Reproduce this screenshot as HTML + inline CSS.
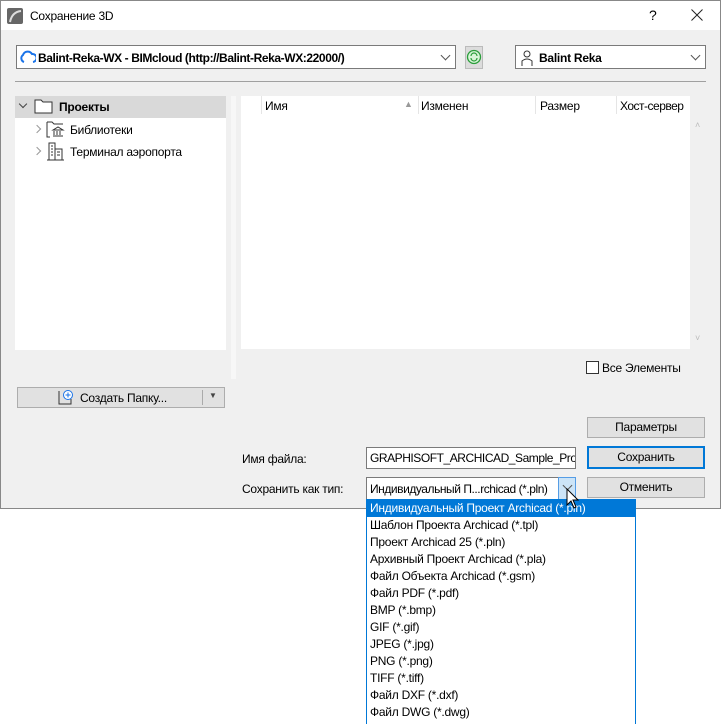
<!DOCTYPE html><html><head><meta charset="utf-8"><style>
*{box-sizing:border-box;margin:0;padding:0}
body{width:722px;height:724px;background:#fff;position:relative;overflow:hidden;font-family:"Liberation Sans","DejaVu Sans",sans-serif;font-size:12px;color:#000;letter-spacing:-0.25px}
.a{position:absolute}
.dlg{left:0;top:0;width:721px;height:509px;background:#f0f0f0}
.brd{left:0;top:0;width:721px;height:509px;border:1px solid #888}
.tb{left:0;top:0;width:721px;height:30px;background:#fff}
.btn{background:#e1e1e1;border:1px solid #adadad;text-align:center;line-height:19px}
.combo{background:#fff;border:1px solid #7a7a7a}
.chev{width:7px;height:7px;border-right:1px solid #555;border-bottom:1px solid #555;transform:rotate(45deg)}
.it{left:0;width:268px;height:17px;line-height:17px;padding-left:3px;font-size:12px}
</style></head><body>
<div class="a dlg">
<div class="a tb">
 <svg class="a" style="left:7px;top:8px" width="16" height="16"><rect width="16" height="16" rx="2" fill="#666"/><path d="M3 14 Q5 4 14 3" stroke="#ddd" stroke-width="2" fill="none"/></svg>
 <div class="a" style="left:30px;top:9px;font-size:12px">Сохранение 3D</div>
 <div class="a" style="left:649px;top:7px;font-size:14px">?</div>
 <svg class="a" style="left:691px;top:9px" width="12" height="12"><path d="M0.5 0.5 L11.5 11.5 M11.5 0.5 L0.5 11.5" stroke="#222" stroke-width="1"/></svg>
</div>
<div class="a combo" style="left:16px;top:45px;width:440px;height:24px"></div>
<svg class="a" style="left:20px;top:50px" width="16" height="14"><path d="M4 12 A4 4 0 0 1 3 5 A5 5 0 0 1 12 4 A4 4 0 0 1 13 12" stroke="#1a73e8" stroke-width="2" fill="none"/></svg>
<div class="a" style="left:38px;top:51px;font-weight:bold;font-size:12px;letter-spacing:-0.4px">Balint-Reka-WX - BIMcloud (http://Balint-Reka-WX:22000/)</div>
<div class="a chev" style="left:442px;top:52px"></div>
<div class="a" style="left:465px;top:46px;width:18px;height:23px;background:#dcdcdc;border:1px solid #bbb"></div>
<svg class="a" style="left:466px;top:49px" width="16" height="16"><circle cx="8" cy="8" r="6.5" fill="#d8f5d8" stroke="#2a9d3a" stroke-width="1.3"/><path d="M5 7 A3 3 0 0 1 11 7 M11 9 A3 3 0 0 1 5 9" stroke="#2a9d3a" stroke-width="1.2" fill="none"/></svg>
<div class="a combo" style="left:515px;top:45px;width:191px;height:24px"></div>
<svg class="a" style="left:521px;top:49px" width="12" height="18"><circle cx="6" cy="5" r="3" fill="none" stroke="#333"/><path d="M1 17 V12 Q6 8 11 12 V17" fill="none" stroke="#333"/></svg>
<div class="a" style="left:539px;top:51px;font-weight:bold">Balint Reka</div>
<div class="a chev" style="left:692px;top:52px"></div>
<div class="a" style="left:15px;top:81px;width:691px;height:1px;background:#a0a0a0"></div>
<div class="a" style="left:15px;top:96px;width:211px;height:254px;background:#fff"></div>
<div class="a" style="left:15px;top:96px;width:211px;height:22px;background:#d9d9d9"></div>
<div class="a" style="left:20px;top:101px;width:6px;height:6px;border-right:1.5px solid #444;border-bottom:1.5px solid #444;transform:rotate(45deg)"></div>
<svg class="a" style="left:34px;top:97px" width="20" height="18"><path d="M1 3 H7 L9 5 H18 V16 H1 Z" fill="#fff" stroke="#333"/></svg>
<div class="a" style="left:59px;top:100px;font-weight:bold">Проекты</div>
<div class="a" style="left:34px;top:126px;width:6px;height:6px;border-right:1px solid #999;border-top:1px solid #999;transform:rotate(45deg)"></div>
<svg class="a" style="left:46px;top:119px" width="20" height="20"><path d="M1 3 H6 L8 5 H17 M1 3 V18 H4" fill="none" stroke="#333"/><path d="M7 11 L12 8 L17 11 Z M8 12 V16 M11 12 V16 M14 12 V16 M7 17 H17" stroke="#333" fill="none"/></svg>
<div class="a" style="left:70px;top:123px">Библиотеки</div>
<div class="a" style="left:34px;top:148px;width:6px;height:6px;border-right:1px solid #999;border-top:1px solid #999;transform:rotate(45deg)"></div>
<svg class="a" style="left:46px;top:141px" width="20" height="20"><path d="M3 19 V2 H9 V19 M9 8 H16 V19 M1 19 H18" fill="none" stroke="#333"/><path d="M5 5 H7 M5 8 H7 M5 11 H7 M5 14 H7 M11 11 H14 M11 14 H14" stroke="#333"/></svg>
<div class="a" style="left:70px;top:145px">Терминал аэропорта</div>
<div class="a" style="left:231px;top:96px;width:5px;height:283px;background:#f7f7f7"></div>
<div class="a" style="left:241px;top:96px;width:449px;height:253px;background:#fff"></div>
<div class="a" style="left:261px;top:96px;width:1px;height:18px;background:#e5e5e5"></div>
<div class="a" style="left:418px;top:96px;width:1px;height:18px;background:#e5e5e5"></div>
<div class="a" style="left:535px;top:96px;width:1px;height:18px;background:#e5e5e5"></div>
<div class="a" style="left:616px;top:96px;width:1px;height:18px;background:#e5e5e5"></div>
<div class="a" style="left:265px;top:99px">Имя</div>
<div class="a" style="left:404px;top:99px;font-size:9px;color:#999">▲</div>
<div class="a" style="left:421px;top:99px">Изменен</div>
<div class="a" style="left:540px;top:99px">Размер</div>
<div class="a" style="left:620px;top:99px;letter-spacing:-0.5px">Хост-сервер</div>
<div class="a" style="left:690px;top:114px;width:16px;height:235px;background:#f0f0f0"></div>
<div class="a" style="left:695px;top:120px;font-size:9px;color:#bbb">˄</div>
<div class="a" style="left:695px;top:333px;font-size:9px;color:#bbb">˅</div>
<div class="a" style="left:586px;top:361px;width:13px;height:13px;background:#fff;border:1px solid #333"></div>
<div class="a" style="left:602px;top:361px">Все Элементы</div>
<div class="a btn" style="left:17px;top:387px;width:208px;height:21px"></div>
<svg class="a" style="left:58px;top:389px" width="16" height="17"><path d="M1 2 V15 H13 V10" fill="none" stroke="#333"/><circle cx="10" cy="6" r="4.5" fill="#fff" stroke="#1a73e8"/><path d="M10 3.5 V8.5 M7.5 6 H12.5" stroke="#1a73e8"/></svg>
<div class="a" style="left:80px;top:391px">Создать Папку...</div>
<div class="a" style="left:202px;top:390px;width:1px;height:15px;background:#aaa"></div>
<div class="a" style="left:209px;top:391px;font-size:8px;color:#444">▼</div>
<div class="a btn" style="left:587px;top:417px;width:118px;height:21px">Параметры</div>
<div class="a" style="left:242px;top:452px">Имя файла:</div>
<div class="a combo" style="left:366px;top:447px;width:210px;height:22px;overflow:hidden;padding:3px 0 0 3px;white-space:nowrap;letter-spacing:-0.45px">GRAPHISOFT_ARCHICAD_Sample_Project</div>
<div class="a btn" style="left:587px;top:446px;width:118px;height:23px;border:2px solid #0078d7">Сохранить</div>
<div class="a" style="left:242px;top:482px">Сохранить как тип:</div>
<div class="a combo" style="left:366px;top:477px;width:210px;height:23px;padding:4px 0 0 3px;white-space:nowrap;overflow:hidden;letter-spacing:-0.45px">Индивидуальный П...rchicad (*.pln)</div>
<div class="a" style="left:558px;top:477px;width:18px;height:23px;background:#cce4f7;border:1px solid #569de5"></div>
<div class="a chev" style="left:564px;top:482px"></div>
<div class="a btn" style="left:587px;top:477px;width:118px;height:21px">Отменить</div>
<div class="a brd"></div>
</div>
<div class="a" style="left:366px;top:499px;width:270px;height:225px;background:#fff;border:1px solid #0078d7;border-bottom:none;overflow:hidden">
<div class="a it" style="top:0;background:#0078d7;color:#fff">Индивидуальный Проект Archicad (*.pln)</div>
<div class="a it" style="top:17px">Шаблон Проекта Archicad (*.tpl)</div>
<div class="a it" style="top:34px">Проект Archicad 25 (*.pln)</div>
<div class="a it" style="top:51px">Архивный Проект Archicad (*.pla)</div>
<div class="a it" style="top:68px">Файл Объекта Archicad (*.gsm)</div>
<div class="a it" style="top:85px">Файл PDF (*.pdf)</div>
<div class="a it" style="top:102px">BMP (*.bmp)</div>
<div class="a it" style="top:119px">GIF (*.gif)</div>
<div class="a it" style="top:136px">JPEG (*.jpg)</div>
<div class="a it" style="top:153px">PNG (*.png)</div>
<div class="a it" style="top:170px">TIFF (*.tiff)</div>
<div class="a it" style="top:187px">Файл DXF (*.dxf)</div>
<div class="a it" style="top:204px">Файл DWG (*.dwg)</div>
</div>
<svg class="a" style="left:566px;top:488px" width="14" height="22"><path d="M1 1 V17 L5 13 L8 20 L10 19 L7 12 L12 12 Z" fill="#fff" stroke="#000"/></svg>
</body></html>
